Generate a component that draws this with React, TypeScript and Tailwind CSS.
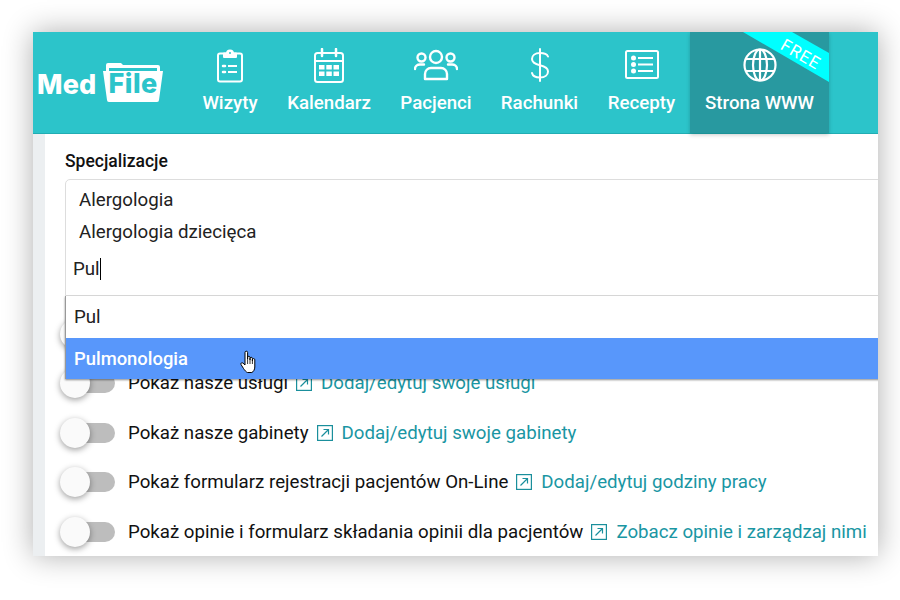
import React from "react";

const ClipboardIcon = () => (
  <svg width="26" height="35" viewBox="0 0 26 35" fill="none" stroke="white" strokeWidth="2" strokeLinejoin="round">
    <rect x="1" y="5.500" width="24" height="28" rx="2" />
    <path d="M7 5.500h3a3 3 0 0 1 6 0h3v3.500H7z" fill="white" />
    <circle cx="13" cy="5" r="1" fill="#2cc4ca" stroke="none" />
    <path d="M11 18h9M11 24h9" />
    <path d="M6 18h2M6 24h2" strokeWidth="2.500" strokeLinecap="round" />
  </svg>
);

const CalendarIcon = () => (
  <svg width="30" height="35" viewBox="0 0 30 35" fill="none" stroke="white" strokeWidth="2">
    <rect x="1" y="5" width="28" height="29" rx="2.500" />
    <path d="M1 13h28" />
    <path d="M8 1v7M22 1v7" strokeLinecap="round" strokeWidth="2.500" />
    <g fill="white" stroke="none">
      <rect x="5" y="17" width="5.500" height="4.500" />
      <rect x="12.300" y="17" width="5.500" height="4.500" />
      <rect x="19.500" y="17" width="5.500" height="4.500" />
      <rect x="5" y="23.500" width="5.500" height="4.500" />
      <rect x="12.300" y="23.500" width="5.500" height="4.500" />
      <rect x="19.500" y="23.500" width="5.500" height="4.500" />
    </g>
  </svg>
);

const PeopleIcon = () => (
  <svg width="44" height="32" viewBox="0 0 44 32" fill="none" stroke="white" strokeWidth="2.400" strokeLinecap="round">
    <circle cx="22" cy="8" r="6" />
    <circle cx="7.500" cy="8.500" r="4" />
    <circle cx="36.500" cy="8.500" r="4" />
    <path d="M11 30v-5a6 6 0 0 1 6-6h10a6 6 0 0 1 6 6v5z" strokeLinejoin="round" />
    <path d="M1 20c0-3 2.500-4.500 5-4.500h4M43 20c0-3-2.500-4.500-5-4.500h-4" />
  </svg>
);

const DollarIcon = () => (
  <svg width="20" height="34" viewBox="0 0 20 34" fill="none" stroke="white" strokeWidth="2" strokeLinecap="round">
    <path d="M10 1v32" />
    <path d="M18 8.500C17 6 14 5 10 5 5 5 2 7.500 2 11c0 4 3.500 5.200 8 6.200s8 2.300 8 6.300c0 3.500-3 6-8 6-4.500 0-7.300-1.500-8-4.500" />
  </svg>
);

const ListIcon = () => (
  <svg width="34" height="30" viewBox="0 0 34 30" fill="none" stroke="white">
    <rect x="1" y="1" width="32" height="27" rx="1.500" strokeWidth="2" />
    <g fill="white" stroke="none">
      <circle cx="8.500" cy="8" r="2.500" />
      <circle cx="8.500" cy="14.500" r="2.500" />
      <circle cx="8.500" cy="21" r="2.500" />
      <rect x="13" y="7" width="15" height="2" />
      <rect x="13" y="13.500" width="15" height="2" />
      <rect x="13" y="20" width="15" height="2" />
    </g>
  </svg>
);

const GlobeIcon = () => (
  <svg width="34" height="34" viewBox="0 0 34 34" fill="none" stroke="white" strokeWidth="2.200">
    <circle cx="17" cy="17" r="15.500" />
    <ellipse cx="17" cy="17" rx="7" ry="15.500" />
    <path d="M17 1.500v31M3 11h28M3 23h28" />
  </svg>
);

const ExternalIcon = () => (
  <svg width="16" height="16" viewBox="0 0 16 16" fill="none" stroke="#1a8f9c" strokeWidth="1.200" className="shrink-0">
    <rect x="0.600" y="0.600" width="14.800" height="14.800" />
    <path d="M4.500 11.500L11.500 4.500M6.500 4.500h5v5" />
  </svg>
);

const HandCursor = () => (
  <svg width="17" height="24" viewBox="0 0 17 24" fill="white" stroke="black" strokeWidth="1" strokeLinejoin="round">
    <path d="M5 12V2.500a1.300 1.300 0 0 1 2.600 0V9l0-1.500a1.200 1.200 0 0 1 2.400 0V10V8.500a1.200 1.200 0 0 1 2.400 0V11V9.800a1.200 1.200 0 0 1 2.400 0V17c0 2.500-1.500 5-3 5.500H7.500C6 22 4.500 20 3.500 18.500L1 14.500c-.6-1.200.9-2.400 2-1.400L5 15z" />
    <path d="M7.600 9v5M10 10v4M12.400 11v3" fill="none" strokeWidth="0.800" />
  </svg>
);

const Toggle = () => (
  <div className="relative w-[55px] h-[30px] shrink-0">
    <div className="absolute left-[15px] right-0 top-[5px] h-[20px] rounded-full bg-[#bdbdbd]" />
    <div className="absolute left-0 top-0 w-[30px] h-[30px] rounded-full bg-[#fafafa] shadow-[0_2px_6px_rgba(0,0,0,0.38)]" />
  </div>
);

const navItems = [
  { label: "Wizyty", icon: <ClipboardIcon />, cls: "w-[84px]" },
  { label: "Kalendarz", icon: <CalendarIcon />, cls: "w-[114px]" },
  { label: "Pacjenci", icon: <PeopleIcon />, cls: "w-[100px]" },
  { label: "Rachunki", icon: <DollarIcon />, cls: "w-[107px]" },
  { label: "Recepty", icon: <ListIcon />, cls: "w-[97px]" },
];

const rows = [
  { text: "Pokaż nasze usługi", link: "Dodaj/edytuj swoje usługi" },
  { text: "Pokaż nasze gabinety", link: "Dodaj/edytuj swoje gabinety" },
  { text: "Pokaż formularz rejestracji pacjentów On-Line", link: "Dodaj/edytuj godziny pracy" },
  { text: "Pokaż opinie i formularz składania opinii dla pacjentów", link: "Zobacz opinie i zarządzaj nimi" },
];

export default function App() {
  return (
    <div className="w-[900px] h-[600px] bg-white pt-[32px] pl-[33px] overflow-hidden font-['Roboto',sans-serif]">
      <div className="w-[845px] h-[524px] bg-white flex flex-col overflow-hidden shadow-[0_0_28px_rgba(0,0,0,0.32)]">
        <nav className="h-[102px] shrink-0 flex bg-[#2cc4ca] border-b border-[#22adb3] text-white">
          <div className="w-[155px] shrink-0 flex items-center pl-[4px] pt-[1px]">
            <span className="font-['Inter',sans-serif] font-extrabold text-[27px] leading-none tracking-[0.2px] mt-[3px]">Med</span>
            <div className="relative w-[62px] h-[40px] ml-[5px] mb-[2px]">
              <svg width="62" height="40" viewBox="0 0 62 40" fill="white">
                <path d="M4 10V3a2 2 0 0 1 2-2h13l2 2h35a2 2 0 0 1 2 2v5h-3V6H7v4z" />
                <path d="M1 9h60l-4 29a2 2 0 0 1-2 2H7a2 2 0 0 1-2-2z" />
              </svg>
              <span className="absolute left-[7px] top-[7px] font-['Inter',sans-serif] font-extrabold text-[27px] leading-[30px] text-[#2cc4ca] tracking-[0.5px]">File</span>
            </div>
          </div>
          {navItems.map((item) => (
            <a key={item.label} className={`${item.cls} shrink-0 flex flex-col items-center`}>
              <div className="h-[36px] mt-[15px] flex items-center justify-center">{item.icon}</div>
              <span className="mt-[8px] text-[18.7px] font-medium leading-[24px] whitespace-nowrap">{item.label}</span>
            </a>
          ))}
          <a className="relative w-[139px] shrink-0 flex flex-col items-center bg-[#2899a0] shadow-[0_2px_4px_rgba(0,0,0,0.2)] overflow-hidden">
            <div className="h-[36px] mt-[15px] flex items-center justify-center"><GlobeIcon /></div>
            <span className="mt-[8px] text-[18.7px] font-medium leading-[24px] whitespace-nowrap">Strona WWW</span>
            <svg className="absolute top-0 left-[53px]" width="86" height="50" viewBox="0 0 86 50" fill="#00ffff">
              <polygon points="0,0 49,0 86,21 86,50" />
            </svg>
            <span className="absolute left-[89px] top-[14px] rotate-[30deg] text-[17px] tracking-[1px] leading-none">FREE</span>
          </a>
        </nav>
        <div className="relative flex-1 flex min-h-0">
          <div className="w-[12px] shrink-0 bg-[#eceff1]" />
          <div className="flex-1 min-w-0 pl-[20px]">
            <div className="mt-[18px] h-[18px] text-[17.5px] font-medium leading-[18px] text-[#111] whitespace-nowrap">Specjalizacje</div>
            <div className="mt-[9px] w-[830px] h-[117px] border border-[#ddd] rounded-tl-[5px] pt-[4px] text-[18.7px] text-[#222]">
              <div className="pl-[13px] h-[32px] leading-[32px]">Alergologia</div>
              <div className="pl-[13px] h-[32px] leading-[32px]">Alergologia dziecięca</div>
              <div className="pl-[7px] mt-[5px] h-[32px] leading-[32px] flex items-center">
                Pul<span className="inline-block w-px h-[22px] bg-black" />
              </div>
            </div>
            <div className="mt-[13.4px] -ml-[5px] flex flex-col text-[18.7px]">
              <div className="h-[49.4px] flex items-center"><Toggle /></div>
              {rows.map((row) => (
                <div key={row.link} className="h-[49.4px] flex items-center whitespace-nowrap">
                  <Toggle />
                  <span className="ml-[13px] text-[#111]">{row.text}</span>
                  <span className="ml-[8px]"><ExternalIcon /></span>
                  <span className="ml-[9px] text-[#1a96a3]">{row.link}</span>
                </div>
              ))}
            </div>
          </div>
          {/* select dropdown lies over the first rows */}
          <div className="absolute left-[32px] top-[162px] w-[830px] bg-white border-l border-[#999] shadow-[0_1px_2px_rgba(0,0,0,0.45)] text-[18.7px]">
            <div className="h-[42px] pl-[8px] leading-[42px] text-[#222]">Pul</div>
            <div className="relative h-[41px] pl-[8px] leading-[41px] bg-[#5897fb] text-white font-medium text-[18.4px]">
              Pulmonologia
              <span className="absolute left-[174px] top-[12px]"><HandCursor /></span>
            </div>
          </div>
        </div>
      </div>
    </div>
  );
}
